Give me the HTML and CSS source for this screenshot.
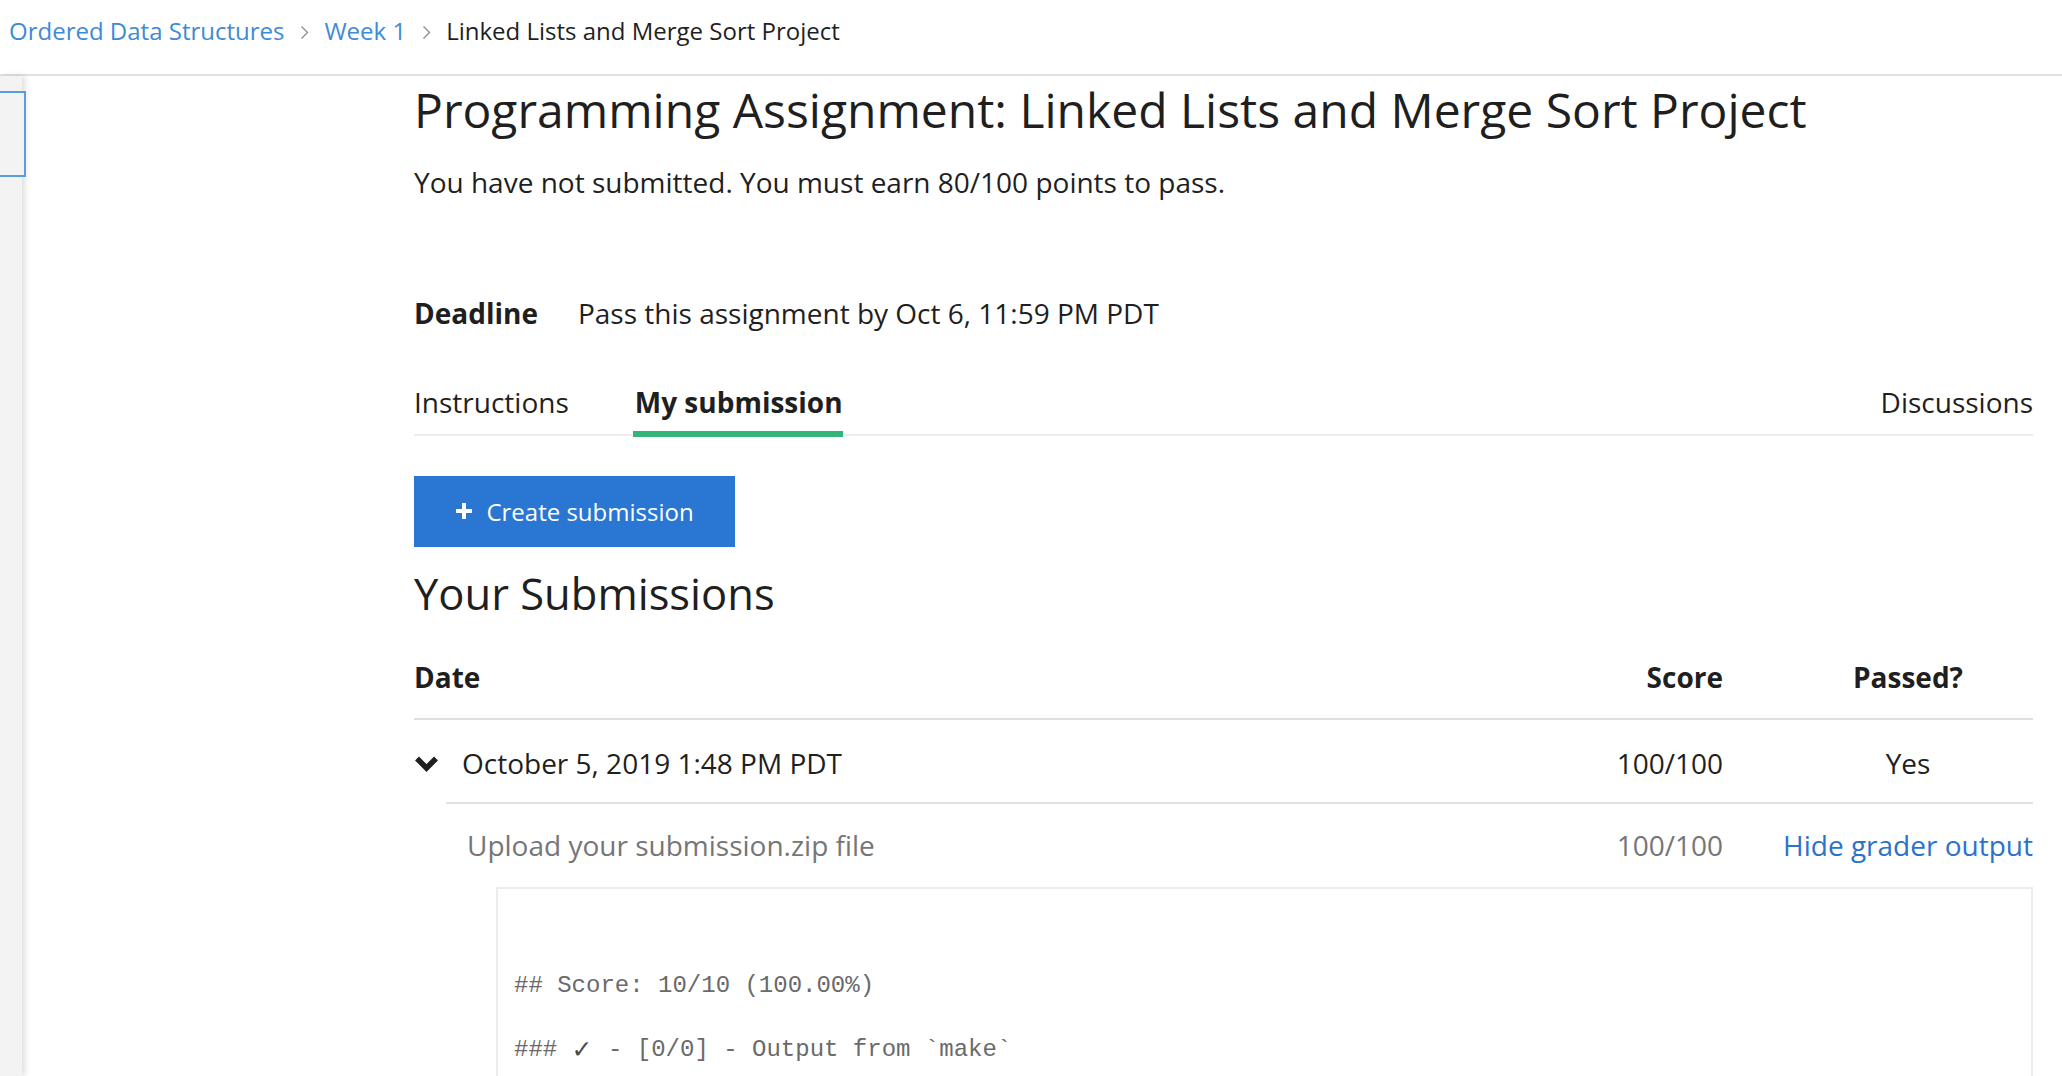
FILE: index.html
```html
<!DOCTYPE html>
<html lang="en">
<head>
<meta charset="utf-8">
<title>Programming Assignment: Linked Lists and Merge Sort Project</title>
<link rel="stylesheet" href="styles.css">
</head>
<body>
<header class="topbar">
  <nav class="crumbs">
    <a class="crumb-link" href="#">Ordered Data Structures</a>
    <svg class="crumb-sep" width="9" height="15" viewBox="0 0 9 15"><polyline points="1.5,1.5 7.5,7.5 1.5,13.5" fill="none" stroke="#8c8c8c" stroke-width="1.3"/></svg>
    <a class="crumb-link" href="#">Week 1</a>
    <svg class="crumb-sep" width="9" height="15" viewBox="0 0 9 15"><polyline points="1.5,1.5 7.5,7.5 1.5,13.5" fill="none" stroke="#8c8c8c" stroke-width="1.3"/></svg>
    <span class="crumb-current">Linked Lists and Merge Sort Project</span>
  </nav>
</header>
<div class="page">
  <aside class="sidebar">
    <div class="side-box"></div>
  </aside>
  <main class="main">
    <h1 class="title">Programming Assignment: Linked Lists and Merge Sort Project</h1>
    <p class="status">You have not submitted. You must earn 80/100 points to pass.</p>
    <div class="deadline">
      <span class="deadline-label">Deadline</span>
      <span class="deadline-text">Pass this assignment by Oct 6, 11:59 PM PDT</span>
    </div>
    <div class="tabs">
      <span class="tab">Instructions</span>
      <span class="tab tab-active">My submission</span>
      <span class="tab tab-right">Discussions</span>
    </div>
    <button class="create-btn" type="button">
      <svg class="plus" width="18" height="18" viewBox="0 0 18 18"><rect x="7" y="1" width="4" height="16" fill="#fff"/><rect x="1" y="7" width="16" height="4" fill="#fff"/></svg>
      <span>Create submission</span>
    </button>
    <h2 class="subs-title">Your Submissions</h2>
    <div class="table">
      <div class="thead">
        <span class="col-date">Date</span>
        <span class="col-score">Score</span>
        <span class="col-pass">Passed?</span>
      </div>
      <div class="row">
        <span class="col-date date-cell">
          <svg class="chev" width="25" height="18" viewBox="0 0 25 18"><polyline points="3,3.5 12.5,13 22,3.5" fill="none" stroke="#1f1f1f" stroke-width="5.5" stroke-linecap="butt" stroke-linejoin="miter"/></svg>
          <span>October 5, 2019 1:48 PM PDT</span>
        </span>
        <span class="col-score">100/100</span>
        <span class="col-pass">Yes</span>
      </div>
      <div class="details">
        <div class="subrow">
          <span class="col-date sub-name">Upload your submission.zip file</span>
          <span class="col-score sub-score">100/100</span>
          <a class="col-pass hide-link" href="#">Hide grader output</a>
        </div>
        <div class="output">
          <div class="out-line">## Score: 10/10 (100.00%)</div>
          <div class="out-line">### <span class="check">✓</span> - [0/0] - Output from `make`</div>
        </div>
      </div>
    </div>
  </main>
</div>
</body>
</html>
```

FILE: styles.css
```css
* { box-sizing: border-box; }
html, body { margin: 0; padding: 0; background: #fff; }
body {
  font-family: "Open Sans", "Noto Sans", sans-serif;
  color: #1f1f1f;
  overflow: hidden;
  height: 1076px;
}

.topbar {
  height: 76px;
  border-bottom: 2px solid #e2e2e2;
  padding: 16px 0 0 9px;
}
.crumbs {
  display: flex;
  align-items: center;
  font-size: 24px;
  line-height: 30px;
}
.crumb-link { color: #3d8bd6; text-decoration: none; }
.crumb-sep { margin: 2px 15px 0 16px; flex-shrink: 0; }
.crumb-current { color: #1f1f1f; }

.page {
  display: flex;
  height: 1000px;
}
.sidebar {
  width: 22px;
  flex-shrink: 0;
  background: #f3f3f3;
  box-shadow: 3px 0 6px rgba(0, 0, 0, 0.13);
  position: relative;
  z-index: 1;
}
.side-box {
  margin: 15px 0 0 -10px;
  width: 36px;
  height: 86px;
  border: 2px solid #5c9be3;
  background: #f3f3f3;
}

.main {
  flex: 1;
  min-width: 0;
  padding: 0 29px 0 392px;
  display: flex;
  flex-direction: column;
  align-items: stretch;
}
.main > * { flex-shrink: 0; }

.title {
  margin: 4px 0 0;
  font-size: 48px;
  line-height: 60px;
  font-weight: 400;
  white-space: nowrap;
}
.status {
  margin: 24px 0 0;
  font-size: 28px;
  line-height: 36px;
}
.deadline {
  margin-top: 95px;
  font-size: 28px;
  line-height: 36px;
  display: flex;
}
.deadline-label { font-weight: 700; margin-right: 40px; }

.tabs {
  margin-top: 53px;
  display: flex;
  font-size: 28px;
  line-height: 36px;
  border-bottom: 2px solid #ededed;
}
.tab {
  padding-bottom: 14px;
  position: relative;
  margin-right: 66px;
}
.tab-active { font-weight: 700; }
.tab-active::after {
  content: "";
  position: absolute;
  left: -2px;
  right: 0;
  bottom: -3px;
  height: 6px;
  background: #33b478;
}
.tab-right { margin-left: auto; margin-right: 0; }

.create-btn {
  margin-top: 40px;
  width: 321px;
  height: 71px;
  align-self: flex-start;
  border: none;
  background: #2a76d3;
  color: #fff;
  font-family: "Open Sans", sans-serif;
  font-size: 24px;
  display: flex;
  align-items: center;
  justify-content: center;
  gap: 13px;
  padding: 0;
}
.plus { margin-top: -2px; }

.subs-title {
  margin: 19px 0 0;
  font-size: 43.5px;
  line-height: 56px;
  font-weight: 400;
}

.table { font-size: 28px; line-height: 36px; }
.thead, .row, .subrow {
  display: grid;
  grid-template-columns: 1fr 200px 250px;
}
.thead {
  padding: 37px 0 23px;
  border-bottom: 2px solid #e0e0e0;
  font-weight: 700;
}
.col-score { text-align: right; padding-right: 60px; }
.col-pass { text-align: center; white-space: nowrap; }
.row { padding: 25px 0 21px; }
.date-cell { display: flex; align-items: center; }
.chev { margin: 2px 23px 0 0; flex-shrink: 0; }

.details {
  margin-left: 32px;
  border-top: 2px solid #e2e2e2;
}
.subrow { padding: 23px 0 0; }
.sub-name { padding-left: 21px; color: #767676; }
.sub-score { color: #767676; }
.hide-link { color: #2a73cc; text-decoration: none; }

.output {
  margin: 24px 0 0 50px;
  border: 2px solid #ececec;
  border-bottom: none;
  height: 200px;
  padding: 81px 16px 0;
  font-family: "Liberation Mono", "DejaVu Sans Mono", monospace;
  font-size: 24px;
  line-height: 32px;
  color: #6a6a6a;
}
.out-line { white-space: pre; }
.out-line + .out-line { margin-top: 32px; }
.check {
  display: inline-block;
  width: 22px;
  text-align: left;
  font-family: "DejaVu Sans", sans-serif;
  font-size: 25px;
  line-height: 32px;
  color: #4a4a4a;
  vertical-align: top;
}
```
